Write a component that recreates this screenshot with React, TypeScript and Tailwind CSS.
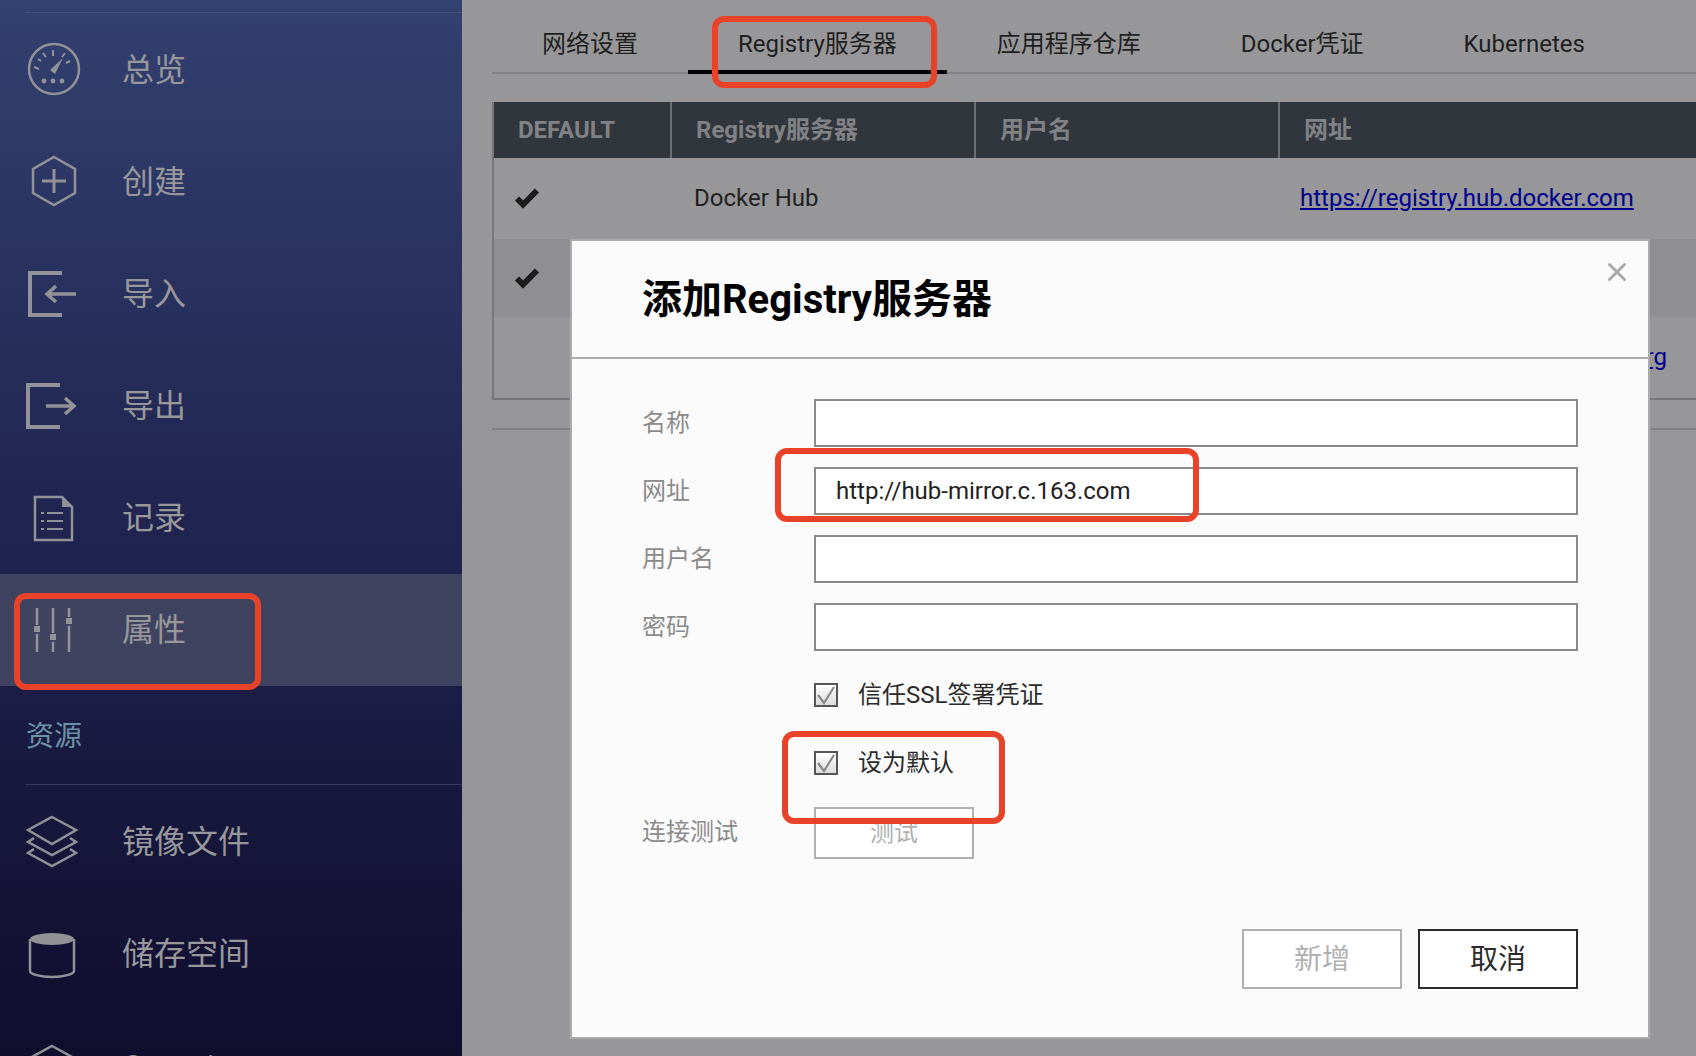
import { X } from 'lucide-react';
import type { ReactNode } from 'react';

const stroke = { fill: 'none', stroke: '#98989c', strokeWidth: 2.5 };

function SideIcon({ children }: { children: ReactNode }) {
  return (
    <svg width="56" height="56" viewBox="0 0 56 56" className="shrink-0 opacity-95">
      {children}
    </svg>
  );
}

const GaugeIcon = () => (
  <SideIcon>
    <circle cx="28" cy="27" r="25" {...stroke} />
    <path d="M27 8v6M12 17l3 2M17 11l3 4M39 11l-3 4M44 19l-4 2M8 25l5 2" {...stroke} strokeWidth="2" />
    <path d="M24 28l13-12-8 16z" fill="#98989c" />
    <circle cx="18" cy="39" r="2.4" fill="#98989c" />
    <circle cx="27" cy="39" r="2.4" fill="#98989c" />
    <circle cx="36" cy="39" r="2.4" fill="#98989c" />
  </SideIcon>
);

const HexPlusIcon = () => (
  <SideIcon>
    <path d="M28 3l21 12v24L28 51 7 39V15z" {...stroke} />
    <path d="M28 15v24M16 27h24" {...stroke} strokeWidth="3" />
  </SideIcon>
);

const ImportIcon = () => (
  <SideIcon>
    <path d="M36 7H4v42h32" {...stroke} strokeWidth="4" />
    <path d="M50 28H21M30 20l-9 8 9 8" {...stroke} strokeWidth="3.5" />
  </SideIcon>
);

const ExportIcon = () => (
  <SideIcon>
    <path d="M34 7H2v42h32" {...stroke} strokeWidth="4" />
    <path d="M20 28h28M39 20l9 8-9 8" {...stroke} strokeWidth="3.5" />
  </SideIcon>
);

const LogIcon = () => (
  <SideIcon>
    <path d="M9 7h27l10 10v33H9z" {...stroke} />
    <path d="M36 7l10 10H36z" fill="#98989c" />
    <path d="M21 23h16M21 31h16M21 39h16" {...stroke} strokeWidth="2" />
    <path d="M15 23h3M15 31h3M15 39h3" {...stroke} strokeWidth="2" />
  </SideIcon>
);

const SlidersIcon = () => (
  <SideIcon>
    <path d="M11 6v17M11 32v18M27 6v25M27 40v10M43 6v9M43 24v26" {...stroke} />
    <rect x="8" y="24" width="6" height="6" fill="#98989c" />
    <rect x="24" y="32" width="6" height="6" fill="#98989c" />
    <rect x="40" y="16" width="6" height="6" fill="#98989c" />
  </SideIcon>
);

const LayersIcon = () => (
  <SideIcon>
    <path d="M26 3l24 13-24 14L2 16z" {...stroke} />
    <path d="M8 24l-6 4 24 13 24-13-6-4" {...stroke} />
    <path d="M8 35l-6 4 24 13 24-13-6-4" {...stroke} />
  </SideIcon>
);

const DiskIcon = () => (
  <SideIcon>
    <ellipse cx="26" cy="13" rx="22" ry="6" fill="#98989c" />
    <path d="M4 13v32c0 3 10 6 22 6s22-3 22-6V13" {...stroke} />
  </SideIcon>
);

const BoxIcon = () => (
  <SideIcon>
    <path d="M26 8l22 12v24L26 56 4 44V20z" {...stroke} />
    <path d="M4 20l22 12 22-12" {...stroke} />
  </SideIcon>
);

function NavItem({ icon, label, active }: { icon: ReactNode; label: string; active?: boolean }) {
  return (
    <div
      className={`flex h-[112px] shrink-0 items-center gap-[40px] pl-[26px] text-[32px] leading-none text-[#98989c] ${
        active ? 'bg-[#40435f]' : ''
      }`}
    >
      {icon}
      <span>{label}</span>
    </div>
  );
}

function Sidebar() {
  return (
    <aside className="flex h-[1056px] w-[462px] shrink-0 flex-col overflow-hidden bg-gradient-to-b from-[#334170] via-[#20244f] to-[#100d2d]">
      <div className="mb-[1px] ml-[26px] mt-[12px] h-px shrink-0 bg-[#444f7a]" />
      <NavItem icon={<GaugeIcon />} label="总览" />
      <NavItem icon={<HexPlusIcon />} label="创建" />
      <NavItem icon={<ImportIcon />} label="导入" />
      <NavItem icon={<ExportIcon />} label="导出" />
      <NavItem icon={<LogIcon />} label="记录" />
      <NavItem icon={<SlidersIcon />} label="属性" active />
      <div className="flex h-[98px] shrink-0 items-center pl-[26px] pt-[4px] text-[28px] leading-none text-[#6c93a6]">资源</div>
      <div className="mb-[1px] ml-[26px] h-px shrink-0 bg-[#3a3a60]" />
      <NavItem icon={<LayersIcon />} label="镜像文件" />
      <NavItem icon={<DiskIcon />} label="储存空间" />
      <NavItem icon={<BoxIcon />} label="Container" />
    </aside>
  );
}

const tabs = ['网络设置', 'Registry服务器', '应用程序仓库', 'Docker凭证', 'Kubernetes'];

function TabBar() {
  return (
    <div className="flex h-[74px] border-b-2 border-[#838385] text-[24px] text-[#1f1f1f]">
      {tabs.map((tab) => (
        <div key={tab} className="relative flex h-[74px] items-center px-[50px] pt-[14px]">
          {tab}
          {tab === 'Registry服务器' && <div className="absolute inset-x-0 bottom-0 h-[4px] bg-black" />}
        </div>
      ))}
    </div>
  );
}

const cols = 'grid grid-cols-[176px_304px_304px_1fr]';

function TableCheck() {
  return (
    <svg width="26" height="22" viewBox="0 0 26 22">
      <path d="M3 11.5l6 6L23 3.5" fill="none" stroke="#1c1c1c" strokeWidth="6" />
    </svg>
  );
}

function RegistryTable() {
  return (
    <div className="mt-[28px] h-[298px] border-b-2 border-l-2 border-[#77777a]">
      <div className={`${cols} h-[56px] bg-[#31353c] text-[24px] font-bold text-[#818285]`}>
        <div className="flex items-center pl-[24px]">DEFAULT</div>
        <div className="flex items-center border-l-2 border-[#6a6d72] pl-[24px]">Registry服务器</div>
        <div className="flex items-center border-l-2 border-[#6a6d72] pl-[24px]">用户名</div>
        <div className="flex items-center border-l-2 border-[#6a6d72] pl-[24px]">网址</div>
      </div>
      <div className={`${cols} h-[81px] items-center pb-[2px] text-[24px] text-[#222]`}>
        <div className="pl-[20px]">
          <TableCheck />
        </div>
        <div className="pl-[24px]">Docker Hub</div>
        <div />
        <div className="pl-[22px] text-[#00008c] underline">https://registry.hub.docker.com</div>
      </div>
      <div className={`${cols} h-[78px] items-center bg-[#8f8f91]`}>
        <div className="pl-[20px]">
          <TableCheck />
        </div>
      </div>
      <div className="flex h-[81px] items-center justify-end pb-[2px] pr-[29px] text-[24px] text-[#00008c] underline">.org</div>
    </div>
  );
}

function Field({ label, value }: { label: string; value?: string }) {
  return (
    <div className="flex items-center">
      <label className="w-[172px] text-[24px] text-[#8b8b8b]">{label}</label>
      <div className="flex h-[48px] flex-1 items-center border-2 border-[#8a8a8a] bg-white pl-[20px] text-[24px] text-[#222]">
        {value}
      </div>
    </div>
  );
}

function CheckRow({ label }: { label: string }) {
  return (
    <div className="ml-[172px] flex h-[24px] items-center gap-[20px] text-[24px] text-[#2b2b2b]">
      <div className="flex h-[24px] w-[24px] items-center justify-center border-2 border-[#555] bg-gradient-to-b from-[#ffffff] to-[#dcdcdc]">
        <svg width="20" height="20" viewBox="0 0 20 20">
          <path d="M2 10l6 8 10-16" fill="none" stroke="#8a8a8a" strokeWidth="2.2" />
        </svg>
      </div>
      <span>{label}</span>
    </div>
  );
}

function Dialog() {
  return (
    <div className="absolute left-[570px] top-[239px] flex h-[800px] w-[1080px] flex-col border-2 border-[#ababab] bg-[#fbfbfb]">
      <div className="relative flex h-[118px] shrink-0 items-center border-b-2 border-[#ababab] pl-[70px] pt-[1px] text-[40px] font-bold leading-none text-black">
        添加Registry服务器
        <X className="absolute right-[16px] top-[16px] h-[30px] w-[30px] text-[#aaaaaa]" strokeWidth={2.4} />
      </div>
      <div className="flex flex-1 flex-col pl-[70px] pr-[70px] pt-[40px]">
        <div className="flex flex-col gap-[20px]">
          <Field label="名称" />
          <Field label="网址" value="http://hub-mirror.c.163.com" />
          <Field label="用户名" />
          <Field label="密码" />
        </div>
        <div className="mt-[32px] flex flex-col gap-[44px]">
          <CheckRow label="信任SSL签署凭证" />
          <CheckRow label="设为默认" />
        </div>
        <div className="mt-[32px] flex items-center">
          <label className="w-[172px] pb-[2px] text-[24px] text-[#8b8b8b]">连接测试</label>
          <div className="flex h-[52px] w-[160px] items-center justify-center border-2 border-[#b0b0b0] bg-white text-[24px] text-[#b0b0b0]">
            测试
          </div>
        </div>
        <div className="mt-[70px] flex justify-end gap-[16px]">
          <div className="flex h-[60px] w-[160px] items-center justify-center border-2 border-[#b0b0b0] bg-white pt-[2px] text-[28px] text-[#b0b0b0]">
            新增
          </div>
          <div className="flex h-[60px] w-[160px] items-center justify-center border-2 border-[#2b2b2b] bg-white pt-[2px] text-[28px] text-[#2b2b2b]">
            取消
          </div>
        </div>
      </div>
    </div>
  );
}

export default function App() {
  return (
    <div className="relative flex h-[1056px] w-[1696px] overflow-hidden bg-[#979799] font-['Roboto','Noto_Sans_CJK_SC',sans-serif]">
      <Sidebar />
      <main className="flex-1 pl-[30px]">
        <TabBar />
        <RegistryTable />
        <div className="mt-[28px] h-[2px] bg-[#838385]" />
      </main>
      <Dialog />

      {/* red annotation boxes drawn on top of the screenshot */}
      <div className="absolute left-[712px] top-[16px] h-[72px] w-[225px] rounded-[12px] border-[6px] border-[#e84329]" />
      <div className="absolute left-[775px] top-[448px] h-[74px] w-[424px] rounded-[12px] border-[6px] border-[#e84329]" />
      <div className="absolute left-[14px] top-[593px] h-[97px] w-[247px] rounded-[12px] border-[6px] border-[#e84329]" />
      <div className="absolute left-[782px] top-[731px] h-[93px] w-[223px] rounded-[12px] border-[6px] border-[#e84329]" />
    </div>
  );
}
